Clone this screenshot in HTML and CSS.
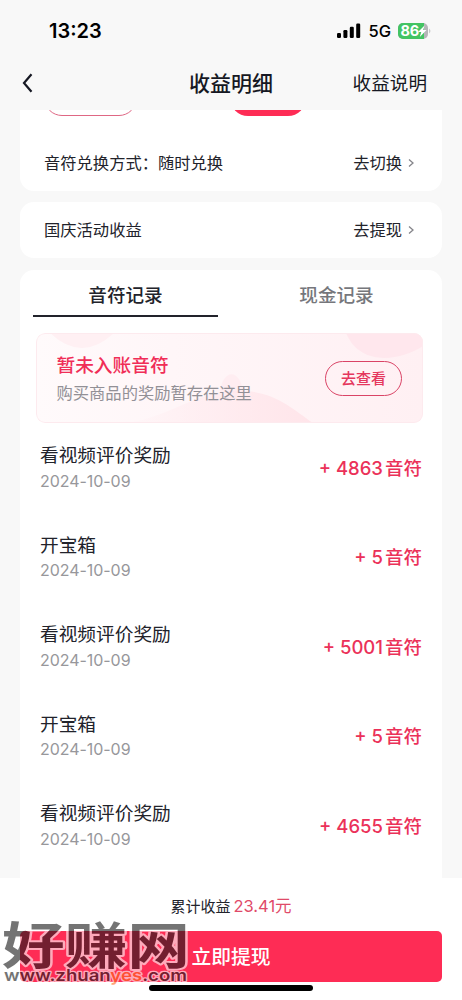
FILE: index.html
```html
<!DOCTYPE html>
<html lang="zh-CN">
<head>
<meta charset="utf-8">
<meta name="viewport" content="width=device-width">
<title>收益明细</title>
<link rel="stylesheet" href="styles.css">
</head>
<body>
<div class="screen">
  <header class="status">
    <span class="clock">13:23</span>
    <div class="indicators">
      <svg class="signal" width="24" height="16" viewBox="0 0 24 16"><rect x="0" y="10" width="4" height="5" rx="1.2"/><rect x="6.4" y="7" width="4" height="8" rx="1.2"/><rect x="12.8" y="3.8" width="4" height="11.2" rx="1.2"/><rect x="19.2" y="0.5" width="4" height="14.5" rx="1.2"/></svg>
      <span class="network">5G</span>
      <svg class="battery" width="33" height="18" viewBox="0 0 33 18">
        <path d="M5 1H25a5 5 0 0 1 5 5v6a5 5 0 0 1-5 5H5a5 5 0 0 1-5-5V6a5 5 0 0 1 5-5z" fill="#b5b5b8"/>
        <path d="M5 1H26V17H5a5 5 0 0 1-5-5V6a5 5 0 0 1 5-5z" fill="#43c463"/>
        <path d="M31.300 6.500q2 2.500 0 5z" fill="#b5b5b8"/>
        <text class="battery-text" x="2.500" y="14.200">86</text>
        <path d="M26.500 3.500l-6.500 6.500h3.300l-1.500 5 6.700-7h-3.300z" fill="#fff"/>
      </svg>
    </div>
  </header>
  <nav class="nav">
    <svg width="12" height="20" viewBox="0 0 12 20"><path d="M10.500 1.200L3 10l7.500 8.800" fill="none" stroke="#161823" stroke-width="2.200"/></svg>
    <h1>收益明细</h1>
    <span class="explain">收益说明</span>
  </nav>
  <main class="content">
    <section class="card exchange">
      <div class="pills"><i class="pill outline"></i><i class="pill solid"></i></div>
      <div class="row"><span>音符兑换方式：随时兑换</span><span class="action">去切换<svg width="7" height="10" viewBox="0 0 7 10"><path d="M1 1.500l4 3.500-4 3.500"/></svg></span></div>
    </section>
    <section class="card holiday">
      <div class="row"><span>国庆活动收益</span><span class="action">去提现<svg width="7" height="10" viewBox="0 0 7 10"><path d="M1 1.500l4 3.500-4 3.500"/></svg></span></div>
    </section>
    <section class="card records">
      <div class="tabs"><span class="tab active">音符记录</span><span class="tab">现金记录</span></div>
      <div class="banner">
        <svg class="banner-art" width="387" height="90" viewBox="0 0 387 90">
          <defs>
            <linearGradient id="base"><stop offset="0" stop-color="#fffafb"/><stop offset=".35" stop-color="#fff6f8"/><stop offset="1" stop-color="#fff0f3"/></linearGradient>
            <linearGradient id="wave"><stop offset="0" stop-color="#ffe5ea" stop-opacity="0"/><stop offset="1" stop-color="#ffe5ea"/></linearGradient>
          </defs>
          <rect width="387" height="90" fill="url(#base)"/>
          <path d="M14 0Q46 30 78 0z" fill="#fff0f3"/>
          <path d="M310 0C325 35 365 27 387 13V0z" fill="#ffe7ed"/>
          <path d="M184 60C186 35 205 35 207 60z" fill="#ffedf1"/>
          <path d="M85 90C135 87 160 54 210 58 240 60 257 76 277 90z" fill="url(#wave)"/>
        </svg>
        <div class="banner-text"><strong>暂未入账音符</strong><span>购买商品的奖励暂存在这里</span></div>
        <span class="view">去查看</span>
      </div>
      <ul class="list">
        <li><div><b>看视频评价奖励</b><time>2024-10-09</time></div><span class="amount">+ <span class="num">4863</span><em>音符</em></span></li>
        <li><div><b>开宝箱</b><time>2024-10-09</time></div><span class="amount">+ <span class="num">5</span><em>音符</em></span></li>
        <li><div><b>看视频评价奖励</b><time>2024-10-09</time></div><span class="amount">+ <span class="num">5001</span><em>音符</em></span></li>
        <li><div><b>开宝箱</b><time>2024-10-09</time></div><span class="amount">+ <span class="num">5</span><em>音符</em></span></li>
        <li><div><b>看视频评价奖励</b><time>2024-10-09</time></div><span class="amount">+ <span class="num">4655</span><em>音符</em></span></li>
      </ul>
    </section>
  </main>
  <footer class="footer">
    <div class="total">累计收益<span>23.41元</span></div>
    <div class="withdraw">立即提现</div>
    <div class="home"></div>
    <svg class="watermark" width="196" height="72" viewBox="0 0 196 72">
      <text class="brand" x="2" y="44.500" textLength="188" lengthAdjust="spacingAndGlyphs">好赚网</text>
      <text class="site" x="4" y="62" textLength="183" lengthAdjust="spacingAndGlyphs">www.zhuan<tspan class="yes">yes</tspan>.com</text>
    </svg>
  </footer>
</div>
</body>
</html>
```
FILE: styles.css
```css
* { box-sizing: border-box; }
body { margin: 0; background: #f8f8f8; }
.screen {
  width: 462px; height: 1000px; overflow: hidden;
  display: flex; flex-direction: column;
  background: #f8f8f8; color: #22232b;
  font-family: Inter, "Noto Sans CJK SC", sans-serif;
  font-size: 16.3px; line-height: 1;
}
.status { height: 62px; padding: 0 31px 0 49px; display: flex; align-items: center; justify-content: space-between; color: #000; flex: none; }
.clock { font-size: 20px; font-weight: 600; letter-spacing: 0; }
.indicators { display: flex; align-items: center; }
.network { font-size: 16.5px; font-weight: 500; margin: 0 7px 0 7px; }
.battery-text { font: 700 14.5px Inter, sans-serif; fill: #fff; letter-spacing: -.3px; }
.nav { height: 48px; padding: 0 35px 6px 21px; flex: none; display: grid; grid-template-columns: 1fr auto 1fr; align-items: center; color: #161823; }
.nav h1 { margin: 0 0 0 14px; font-size: 21px; font-weight: 500; }
.explain { justify-self: end; font-size: 18.6px; }
.content { height: 768px; flex: none; overflow: hidden; padding: 0 20px; display: flex; flex-direction: column; }
.card { background: #fff; border-radius: 14px; flex: none; }
.exchange { height: 81px; margin-bottom: 11px; border-radius: 0 0 14px 14px; }
.pills { height: 25px; display: flex; align-items: flex-start; overflow: hidden; }
.pill { height: 36px; margin-top: -30px; border-radius: 18px; flex: none; }
.outline { width: 93px; margin-left: 24px; border: 1px solid #df6784; }
.solid { width: 76px; margin-left: 93px; background: #fe2c55; }
.row { height: 56px; display: flex; justify-content: space-between; align-items: center; padding: 0 27px 0 24px; }
.action { display: flex; align-items: center; gap: 6px; }
.action svg { fill: none; stroke: #85858a; stroke-width: 1.3; }
.holiday { height: 56px; margin-bottom: 12px; }
.records { height: 640px; padding: 0 16px; }
.tabs { height: 47px; display: grid; grid-template-columns: 185px 1fr; margin: 0 -3px; }
.tab { display: flex; align-items: center; justify-content: center; font-size: 18.6px; font-weight: 500; color: #76777c; padding-top: 5px; border-bottom: 2.5px solid transparent; }
.tab:last-child { padding-left: 26px; }
.tab.active { color: #22232b; border-color: #22232b; }
.banner { position: relative; width: 387px; height: 90px; margin-top: 16px; border-radius: 9px; overflow: hidden; display: flex; align-items: center; justify-content: space-between; padding: 0 21px 0 20.5px; }
.banner-art { position: absolute; left: 0; top: 0; }
.banner::after { content: ""; position: absolute; inset: 0; border: 1.5px solid #fdeaee; border-radius: 9px; }
.banner-text { position: relative; display: flex; flex-direction: column; gap: 9px; padding-top: 2px; color: #929096; }
.banner-text strong { font-size: 18.7px; font-weight: 500; color: #f02d57; }
.view { position: relative; width: 77px; height: 35px; border: 1.5px solid #da4466; border-radius: 18px; display: flex; align-items: center; justify-content: center; font-size: 15px; font-weight: 500; color: #e5375d; }
.list { list-style: none; margin: 0; padding: 0 4px 0 4px; }
.list li { height: 89.6px; display: flex; align-items: center; justify-content: space-between; }
.list div { display: flex; flex-direction: column; gap: 7px; }
.list b { font-size: 18.7px; font-weight: 400; }
.list time { font-size: 16px; color: #97979b; letter-spacing: -.05px; }
.amount { color: #eb3159; font-size: 18.5px; font-weight: 500; white-space: pre; }
.amount em { font-style: normal; margin-left: 2px; }
.footer { position: relative; height: 122px; flex: none; background: #fff; padding: 0 20px; }
.total { height: 53px; padding-top: 3px; display: flex; align-items: center; justify-content: center; gap: 3px; font-size: 15px; }
.total span { font-size: 16.5px; color: #df4a69; }
.withdraw { height: 51px; background: #fe2c55; border-radius: 5px; color: #fff; display: flex; align-items: center; justify-content: center; padding-top: 2px; font-size: 19.8px; font-weight: 500; }
.home { width: 164px; height: 6px; margin: 3px auto 0; border-radius: 3px; background: #000; }
.watermark { position: absolute; left: 0; top: 41px; opacity: .6; overflow: visible; }
.watermark text { paint-order: stroke; stroke: #fff; stroke-linejoin: round; fill: #181818; }
.watermark .brand { font: 700 50px "Noto Sans CJK SC", sans-serif; stroke-width: 4px; }
.watermark .site { font: 600 16px Inter, sans-serif; stroke-width: 2.5px; }
.watermark .yes { fill: #ff6a1c; }
```
